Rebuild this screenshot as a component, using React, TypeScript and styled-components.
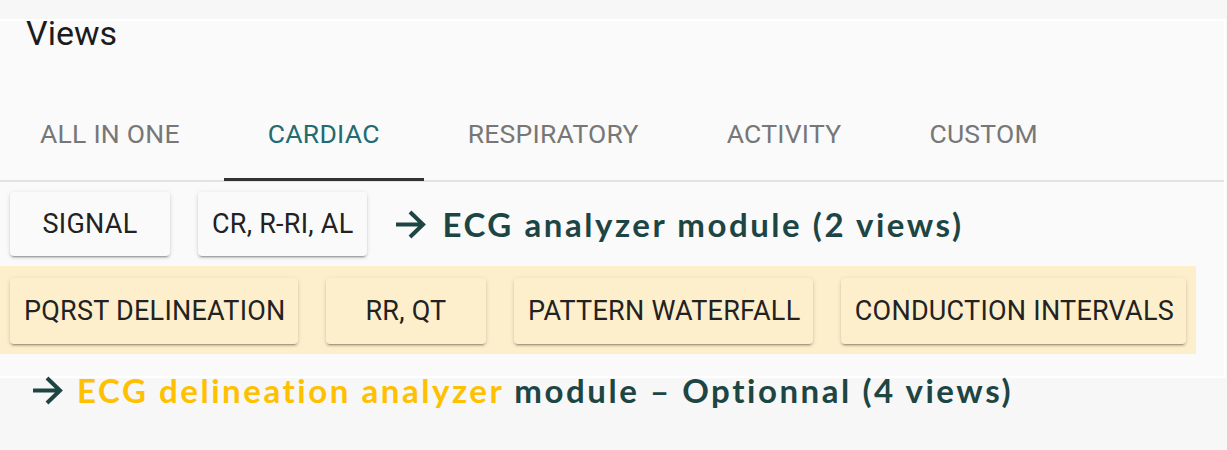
import React from 'react';
import styled, { createGlobalStyle } from 'styled-components';

const GlobalStyle = createGlobalStyle`
  body {
    margin: 0;
    background: #f7f7f7;
    font-family: Roboto, "Liberation Sans", Arial, sans-serif;
  }
`;

const Page = styled.div`
  width: 1227px;
  height: 450px;
  padding-top: 19px;
  box-sizing: border-box;
  overflow: hidden;
`;

const Panel = styled.section`
  width: 1226px;
  height: 359px;
  box-sizing: border-box;
  background: #fafafa;
  border: 2px solid #ffffff;
  border-left: none;
  display: flex;
  flex-direction: column;
`;

const Title = styled.h1`
  margin: -5px 0 0 26px;
  font-size: 34px;
  line-height: 34px;
  font-weight: 400;
  color: #1c1c1c;
`;

const TabBar = styled.div`
  margin-top: 39px;
  display: flex;
  border-bottom: 2px solid #e3e3e3;
`;

const Tab = styled.div<{ $active?: boolean }>`
  padding: 0 44px;
  height: 92px;
  display: flex;
  align-items: center;
  box-sizing: border-box;
  font-size: 26.5px;
  letter-spacing: 0.25px;
  white-space: nowrap;
  color: ${p => (p.$active ? '#236b73' : '#777777')};
  border-bottom: 3px solid ${p => (p.$active ? '#333333' : 'transparent')};
  margin-bottom: -1px;
  &:first-child {
    padding-left: 40px;
  }
`;

const ButtonRow = styled.div<{ $highlight?: boolean }>`
  display: flex;
  align-items: center;
  gap: 28px;
  padding: 10px 10px;
  ${p =>
    p.$highlight &&
    `
    width: 1196px;
    box-sizing: border-box;
    background: #fdefcb;
    padding: 12px 10px 10px;
  `}
`;

const ViewButton = styled.button<{ $tint?: boolean }>`
  height: ${p => (p.$tint ? '66px' : '64px')};
  min-width: 160px;
  padding: 0 14px;
  border: none;
  border-radius: 4px;
  white-space: nowrap;
  background: ${p => (p.$tint ? '#fdefcb' : '#fafafa')};
  color: #222222;
  font-family: Roboto, "Liberation Sans", Arial, sans-serif;
  font-size: 27px;
  letter-spacing: 0.25px;
  box-shadow: 0 3px 1px -2px rgba(0, 0, 0, 0.2), 0 2px 2px 0 rgba(0, 0, 0, 0.14),
    0 1px 5px 0 rgba(0, 0, 0, 0.12);
`;

const Note = styled.div`
  display: flex;
  align-items: center;
  gap: 16px;
  font-family: Lato, "Open Sans", sans-serif;
  font-weight: 700;
  font-size: 33px;
  letter-spacing: 2.55px;
  white-space: nowrap;
  color: #1d4543;
`;

const FooterNote = styled(Note)`
  margin: -8px 0 0 32px;
  gap: 14px;
`;

const Highlight = styled.span`
  color: #ffc000;
`;

const Arrow = () => (
  <svg width="31" height="29" viewBox="0 0 31 29">
    <path
      d="M1 14.5 H28 M15 2 L28 14.5 L15 27"
      fill="none"
      stroke="#1d4543"
      strokeWidth="4"
    />
  </svg>
);

const tabs = ['ALL IN ONE', 'CARDIAC', 'RESPIRATORY', 'ACTIVITY', 'CUSTOM'];
const delineationViews = ['PQRST DELINEATION', 'RR, QT', 'PATTERN WATERFALL', 'CONDUCTION INTERVALS'];

export default function App() {
  return (
    <Page>
      <GlobalStyle />
      <Panel>
        <Title>Views</Title>
        <TabBar>
          {tabs.map(t => (
            <Tab key={t} $active={t === 'CARDIAC'}>
              {t}
            </Tab>
          ))}
        </TabBar>
        <ButtonRow>
          <ViewButton>SIGNAL</ViewButton>
          <ViewButton>CR, R-RI, AL</ViewButton>
          <Note>
            <Arrow />
            <span>ECG analyzer module (2 views)</span>
          </Note>
        </ButtonRow>
        <ButtonRow $highlight>
          {delineationViews.map(v => (
            <ViewButton key={v} $tint>
              {v}
            </ViewButton>
          ))}
        </ButtonRow>
      </Panel>
      <FooterNote>
        <Arrow />
        <span>
          <Highlight>ECG delineation analyzer</Highlight> module – Optionnal (4 views)
        </span>
      </FooterNote>
    </Page>
  );
}
